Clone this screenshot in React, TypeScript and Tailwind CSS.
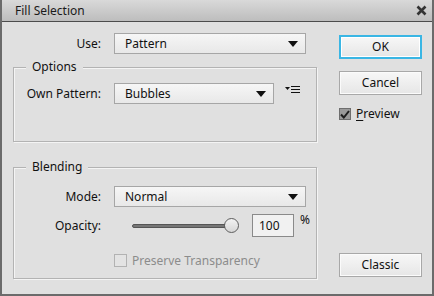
const Arrow = () => (
    <svg width="10" height="6" viewBox="0 0 10 6" className="shrink-0">
        <path d="M0 0H10L5 6Z" fill="#111" />
    </svg>
);

const Select = ({ value, w }: { value: string; w: string }) => {
    return (
        <div
            className={`${w} h-[21px] flex items-center justify-between pl-[10px] pr-[7px] border border-[#a6a6a6] bg-gradient-to-b from-[#f6f6f6] to-[#e8e8e8] text-[12px] text-[#111]`}
        >
            <span>{value}</span>
            <Arrow />
        </div>
    );
};

const Button = ({ label, focus }: { label: string; focus?: boolean }) => {
    return (
        <div
            className={`w-[83px] h-[24px] flex items-center justify-center text-[12px] text-[#111] bg-gradient-to-b from-[#f7f7f7] to-[#e6e6e6] ${
                focus
                    ? "border-2 border-[#3ab6e4] shadow-[inset_0_0_0_1px_#fff]"
                    : "border border-[#a8a8a8] shadow-[inset_0_0_0_1px_#fbfbfb]"
            }`}
        >
            {label}
        </div>
    );
};

const Group = ({ title, h, children }: { title: string; h: string; children: React.ReactNode }) => {
    return (
        <div className={`${h} w-[304px] border border-[#b3b3b3] shadow-[inset_1px_1px_0_#f4f4f4,1px_1px_0_#f4f4f4]`}>
            <div className="-mt-[9px] ml-[12px] w-fit px-[6px] h-[16px] leading-[16px] bg-[#e0e0e0] text-[12px] text-[#111]">
                {title}
            </div>
            {children}
        </div>
    );
};

const App = () => {
    return (
        <div
            className="w-[434px] h-[296px] flex flex-col bg-[#e0e0e0] border-x-2 border-b-2 border-[#6b6b6b] text-[12px] text-[#111]"
            style={{ fontFamily: '"Noto Sans", "Open Sans", sans-serif' }}
        >
            <div className="h-[22px] shrink-0 flex items-center justify-between pl-[13px] pr-[5px] bg-gradient-to-b from-[#d9d9d9] to-[#bdbdbd] border-b border-[#4c4c4c]">
                <span className="text-[12px] text-[#1a1a1a]">Fill Selection</span>
                <svg width="11" height="11" viewBox="0 0 11 11">
                    <path d="M1.5 1.5L9.5 9.5M9.5 1.5L1.5 9.5" stroke="#333" strokeWidth="2.6" />
                </svg>
            </div>

            <div className="flex flex-1 pt-[11px]">
                <div className="ml-[11px] w-[304px] flex flex-col">
                    <div className="flex items-center h-[21px]">
                        <div className="w-[88px] text-right">Use:</div>
                        <div className="ml-[13px]">
                            <Select value="Pattern" w="w-[192px]" />
                        </div>
                    </div>

                    <div className="mt-[13px]">
                        <Group title="Options" h="h-[75px]">
                            <div className="mt-[8px] flex items-center h-[21px]">
                                <div className="w-[87px] text-right">Own Pattern:</div>
                                <div className="ml-[13px]">
                                    <Select value="Bubbles" w="w-[160px]" />
                                </div>
                                <svg width="15" height="9" viewBox="0 0 15 9" className="ml-[11px] -mt-[8px]">
                                    <path d="M0 2H5L2.5 5Z" fill="#111" />
                                    <path d="M6 1.5H15M6 4.5H15M6 7.5H15" stroke="#111" strokeWidth="1.2" />
                                </svg>
                            </div>
                        </Group>
                    </div>

                    <div className="mt-[25px]">
                        <Group title="Blending" h="h-[112px]">
                            <div className="mt-[11px] flex items-center h-[21px]">
                                <div className="w-[87px] text-right">Mode:</div>
                                <div className="ml-[13px]">
                                    <Select value="Normal" w="w-[192px]" />
                                </div>
                            </div>
                            <div className="mt-[7px] flex items-center h-[23px]">
                                <div className="w-[87px] text-right">Opacity:</div>
                                <div className="ml-[31px] w-[107px] flex items-center">
                                    <div className="w-[95px] h-[4px] rounded-full bg-[#767676] border border-[#555]" />
                                    <div className="-ml-[3px] w-[15px] h-[15px] rounded-full border border-[#5d5d5d] bg-gradient-to-b from-[#f2f2f2] to-[#d6d6d6]" />
                                </div>
                                <div className="ml-[13px] w-[42px] h-[23px] flex items-center pl-[6px] border border-[#8a8a8a] bg-[#f1f1f1]">
                                    100
                                </div>
                                <div className="ml-[6px] self-start -mt-[3px]">%</div>
                            </div>
                            <div className="mt-[17px] flex items-center h-[13px]">
                                <div className="ml-[100px] w-[13px] h-[13px] border border-[#b2b2b2] bg-[#e3e3e3]" />
                                <div className="ml-[5px] text-[#8c8c8c]">Preserve Transparency</div>
                            </div>
                        </Group>
                    </div>
                </div>

                <div className="ml-[22px] w-[83px] flex flex-col">
                    <div className="mt-[2px]">
                        <Button label="OK" focus />
                    </div>
                    <div className="mt-[12px]">
                        <Button label="Cancel" />
                    </div>
                    <div className="mt-[13px] flex items-center h-[12px]">
                        <div className="w-[12px] h-[12px] border border-[#6e6e6e] bg-[#9a9a9a] flex items-center justify-center">
                            <svg width="10" height="9" viewBox="0 0 10 9">
                                <path d="M1 4.5L3.8 7.5L9 1" fill="none" stroke="#1e1e1e" strokeWidth="2" />
                            </svg>
                        </div>
                        <div className="ml-[5px]">
                            <span className="underline underline-offset-2">P</span>review
                        </div>
                    </div>
                    <div className="mt-[133px]">
                        <Button label="Classic" />
                    </div>
                </div>
            </div>
        </div>
    );
};

export default App;
